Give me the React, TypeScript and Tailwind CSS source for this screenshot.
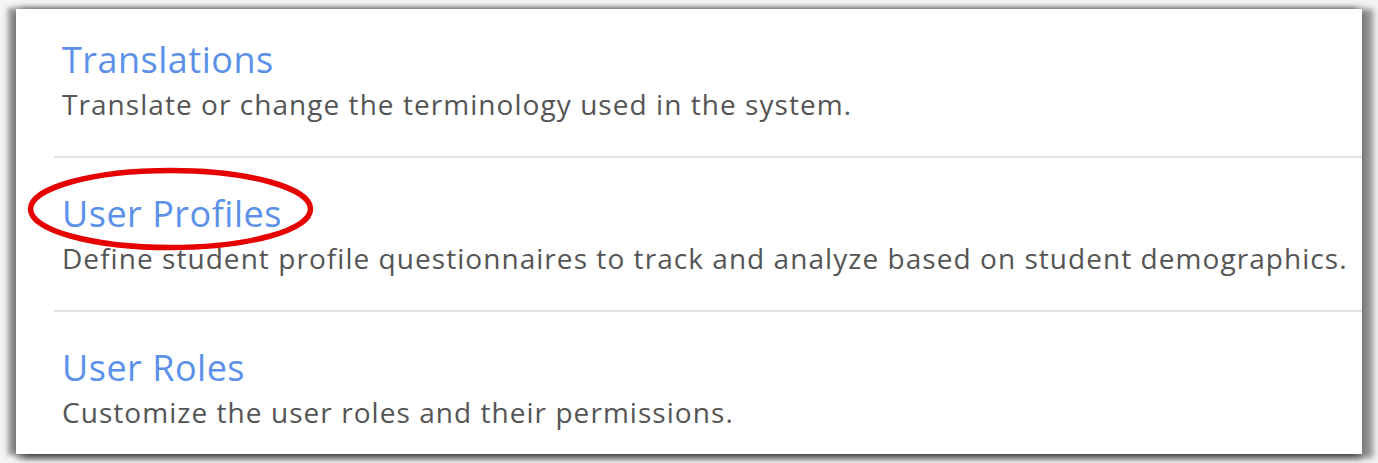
const items = [
  {
    title: 'Translations',
    description: 'Translate or change the terminology used in the system.',
  },
  {
    title: 'User Profiles',
    description: 'Define student profile questionnaires to track and analyze based on student demographics.',
  },
  {
    title: 'User Roles',
    description: 'Customize the user roles and their permissions.',
  },
]

export default function App() {
  return (
    <div className="relative w-[1378px] h-[463px] overflow-hidden bg-[#f4f4f4] font-['Open_Sans',sans-serif]">
      <div className="absolute left-[16px] top-[9px] w-[1346px] h-[445px] bg-white shadow-[-7px_0_5px_1px_rgba(0,0,0,0.4),9px_2px_6px_2px_rgba(0,0,0,0.42),0_6px_5px_0_rgba(0,0,0,0.28),0_-3px_6px_0_rgba(0,0,0,0.12)]">
        <ul className="ml-[38px]">
          {items.map((item, i) => (
            <li
              key={item.title}
              className={`pl-[8px] pb-[32px] ${i === 0 ? 'pt-[27px]' : 'pt-[32px]'} ${i < items.length - 1 ? 'border-b-2 border-[#e3e3e3]' : ''}`}
            >
              <a href="#" className="block text-[36px] leading-[48px] tracking-[0.5px] text-[#5c91ea]">
                {item.title}
              </a>
              <p className="text-[28px] leading-[40px] tracking-[1.05px] text-[#555555]">{item.description}</p>
            </li>
          ))}
        </ul>
      </div>

      {/* red circle drawn over the screenshot */}
      <svg className="absolute left-0 top-0 pointer-events-none" width="1378" height="463">
        <ellipse cx="170.5" cy="209" rx="140" ry="38.5" fill="none" stroke="#e60000" strokeWidth="5.5" />
      </svg>
    </div>
  )
}
